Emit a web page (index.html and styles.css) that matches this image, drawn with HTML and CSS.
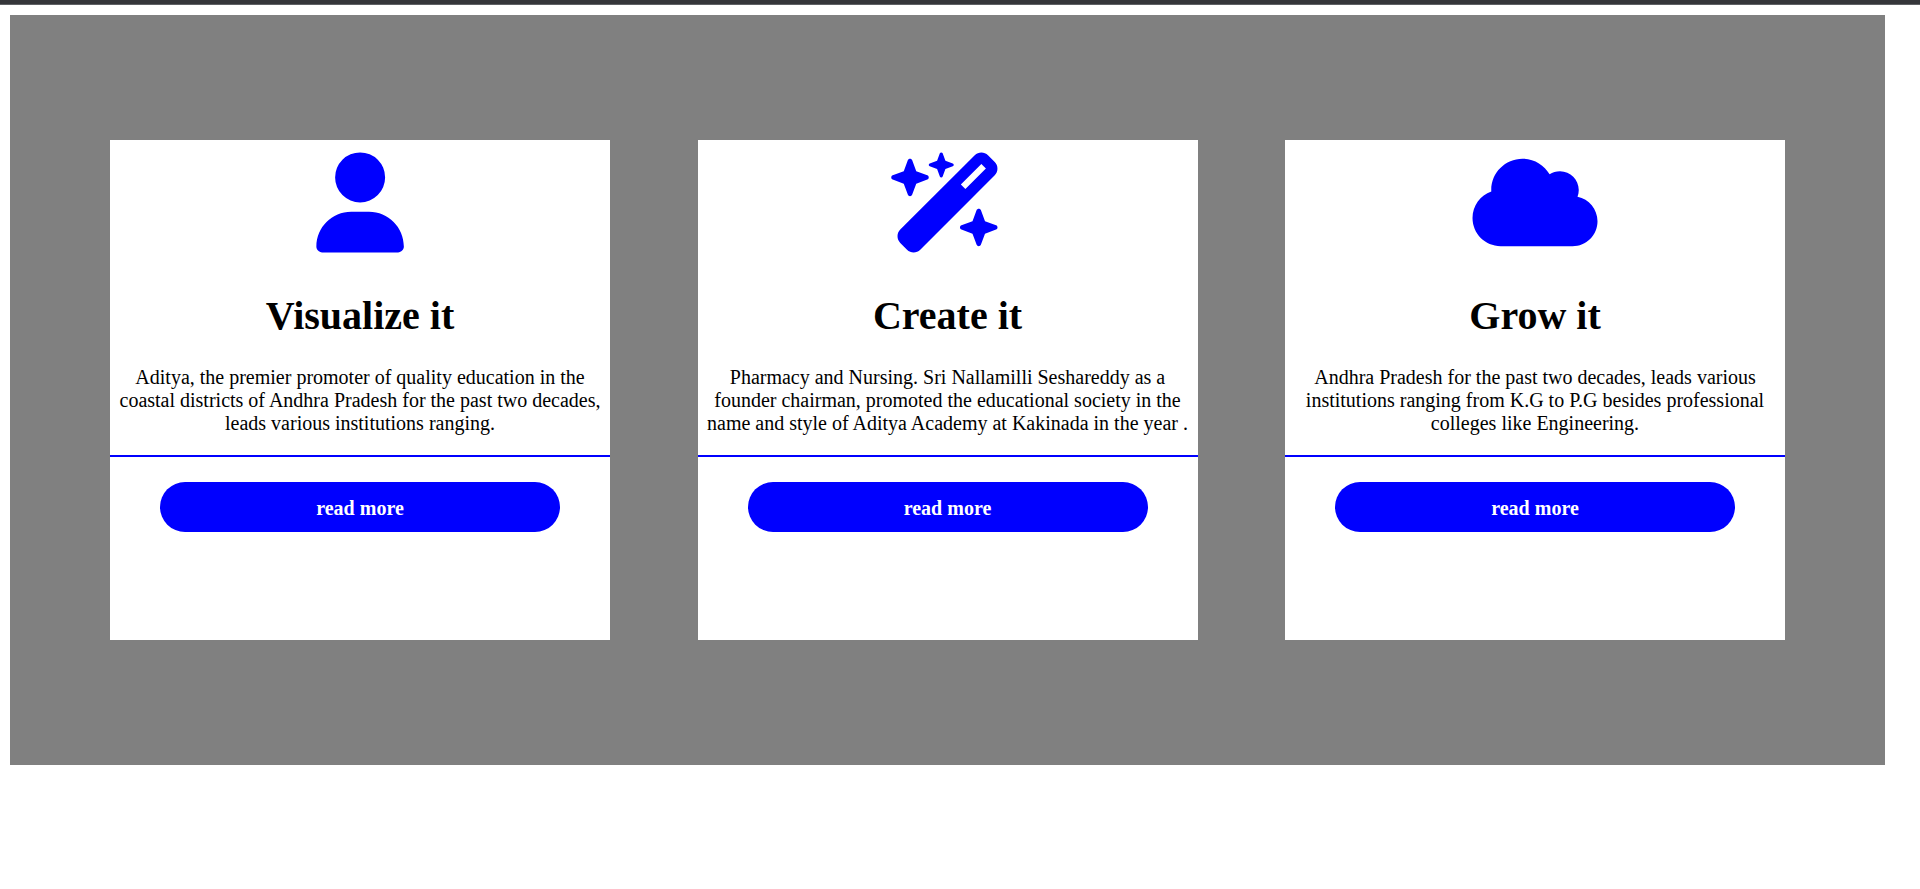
FILE: index.html
```html
<!DOCTYPE html>
<html lang="en">
<head>
<meta charset="utf-8">
<title>Cards</title>
<link rel="stylesheet" href="styles.css">
</head>
<body>
<div class="topbar"></div>
<main class="panel">
  <section class="card">
    <svg class="icon" viewBox="0 0 640 512"><path transform="translate(94 2)" d="M224 256A128 128 0 1 0 224 0a128 128 0 1 0 0 256zm-45.7 48C79.8 304 0 383.8 0 482.3C0 498.7 13.3 512 29.7 512H418.3c16.4 0 29.7-13.3 29.7-29.7C448 383.8 368.2 304 269.7 304H178.3z"/></svg>
    <h1>Visualize it</h1>
    <p>Aditya, the premier promoter of quality education in the coastal districts of Andhra Pradesh for the past two decades, leads various institutions ranging.</p>
    <div class="rule"></div>
    <a class="button">read more</a>
  </section>
  <section class="card">
    <svg class="icon" viewBox="0 0 640 512"><path transform="translate(32 2)" d="M234.7 42.7L197 56.8c-3 1.1-5 4-5 7.2s2 6.1 5 7.2l37.7 14.1L248.8 123c1.1 3 4 5 7.2 5s6.1-2 7.2-5l14.1-37.7L315 71.2c3-1.1 5-4 5-7.2s-2-6.1-5-7.2L277.3 42.7 263.2 5c-1.1-3-4-5-7.2-5s-6.1 2-7.2 5L234.7 42.7zM46.1 395.4c-18.7 18.7-18.7 49.1 0 67.9l34.6 34.6c18.7 18.7 49.1 18.7 67.9 0L529.9 116.5c18.7-18.7 18.7-49.1 0-67.9L495.3 14.1c-18.7-18.7-49.1-18.7-67.9 0L46.1 395.4zM484.6 82.6l-105 105-23.3-23.3 105-105 23.3 23.3zM7.5 117.2C3 118.9 0 123.2 0 128s3 9.1 7.5 10.8L64 160l21.2 56.5c1.7 4.5 6 7.5 10.8 7.5s9.1-3 10.8-7.5L128 160l56.5-21.2c4.5-1.7 7.5-6 7.5-10.8s-3-9.1-7.5-10.8L128 96 106.8 39.5C105.1 35 100.8 32 96 32s-9.1 3-10.8 7.5L64 96 7.5 117.2zm352 256c-4.5 1.7-7.5 6-7.5 10.8s3 9.1 7.5 10.8L416 416l21.2 56.5c1.7 4.5 6 7.5 10.8 7.5s9.1-3 10.8-7.5L480 416l56.5-21.2c4.5-1.7 7.5-6 7.5-10.8s-3-9.1-7.5-10.8L480 352l-21.2-56.5c-1.7-4.5-6-7.5-10.8-7.5s-9.1 3-10.8 7.5L416 352l-56.5 21.2z"/></svg>
    <h1>Create it</h1>
    <p>Pharmacy and Nursing. Sri Nallamilli Seshareddy as a founder chairman, promoted the educational society in the name and style of Aditya Academy at Kakinada in the year .</p>
    <div class="rule"></div>
    <a class="button">read more</a>
  </section>
  <section class="card">
    <svg class="icon" viewBox="0 0 640 512"><path transform="translate(-2.5 2)" d="M0 336c0 79.5 64.5 144 144 144H512c70.7 0 128-57.3 128-128c0-61.9-44-113.6-102.4-125.4c4.1-10.7 6.4-22.4 6.4-34.6c0-53-43-96-96-96c-19.7 0-38.1 6-53.3 16.2C367 64.2 315.3 32 256 32C167.6 32 96 103.6 96 192c0 2.7 .1 5.4 .2 8.1C40.2 219.8 0 273.2 0 336z"/></svg>
    <h1>Grow it</h1>
    <p>Andhra Pradesh for the past two decades, leads various institutions ranging from K.G to P.G besides professional colleges like Engineering.</p>
    <div class="rule"></div>
    <a class="button">read more</a>
  </section>
</main>
</body>
</html>
```
FILE: styles.css
```css
* {
  box-sizing: border-box;
}

body {
  margin: 0;
  background: #fff;
  color: #000;
  font-family: "Liberation Serif", "Times New Roman", serif;
  font-size: 20px;
  line-height: 23px;
}

.topbar {
  height: 5px;
  background: #35363a;
  border-bottom: 1px solid #5f6165;
}

.panel {
  display: flex;
  justify-content: space-between;
  align-items: center;
  width: 1875px;
  height: 750px;
  margin: 10px 0 0 10px;
  padding: 0 100px;
  background: #808080;
}

.card {
  display: flex;
  flex-direction: column;
  align-items: center;
  width: 500px;
  height: 500px;
  padding-top: 12px;
  background: #fff;
  text-align: center;
}

.icon {
  display: block;
  flex: none;
  width: 125px;
  height: 100px;
  overflow: visible;
  fill: #00f;
}

.card h1 {
  margin: 41px 0 27px;
  font-size: 40px;
  line-height: 46px;
}

.card p {
  margin: 0 0 20px;
}

.rule {
  width: 100%;
  height: 2px;
  background: #00f;
}

.button {
  width: 400px;
  height: 50px;
  margin-top: 25px;
  padding-top: 1px;
  border-radius: 25px;
  background: #00f;
  color: #fff;
  font-weight: bold;
  line-height: 50px;
}
```
